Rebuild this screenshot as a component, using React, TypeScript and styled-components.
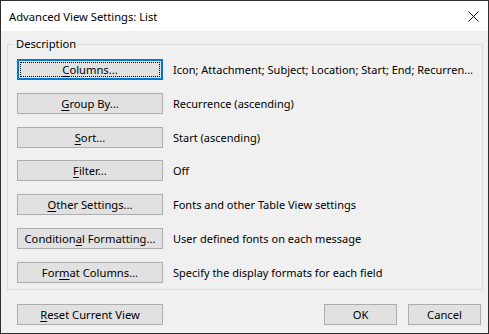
import React from "react";
import styled, { createGlobalStyle } from "styled-components";

const FS = "11px";

const Global = createGlobalStyle`
  html, body { margin: 0; padding: 0; background: #f0f0f0; }
  body { font-family: "Segoe UI", "Noto Sans", "Open Sans", sans-serif; font-size: ${FS}; color: #000; }
`;

const Window = styled.div`
  box-sizing: border-box;
  width: 489px;
  height: 334px;
  border: 1px solid #2f2f2f;
  background: #f0f0f0;
  display: flex;
  flex-direction: column;
`;

const TitleBar = styled.div`
  height: 30px;
  background: #fff;
  display: flex;
  align-items: center;
  justify-content: space-between;
  padding: 0 9px 0 8px;
  flex-shrink: 0;
`;

const Title = styled.span`
  font-size: 11.2px;
  color: #000;
`;

const Body = styled.div`
  flex: 1;
  display: flex;
  flex-direction: column;
  padding: 5px 7px 0 6px;
`;

const Group = styled.fieldset`
  margin: 0;
  border: 1px solid #dcdcdc;
  padding: 7px 9px 6px 9px;
  display: flex;
  flex-direction: column;
  gap: 12.8px;
`;

const Legend = styled.legend`
  padding: 0 2px;
  margin-left: -3px;
  font-size: 11.2px;
  line-height: 16px;
`;

const Row = styled.div`
  display: flex;
  align-items: center;
  gap: 10px;
`;

const Button = styled.button<{ $focused?: boolean; $w?: number }>`
  box-sizing: border-box;
  width: ${(p) => p.$w ?? 146}px;
  height: 21px;
  margin: 0;
  padding: 0;
  font-family: inherit;
  font-size: 11.2px;
  color: #000;
  background: #e1e1e1;
  border: ${(p) => (p.$focused ? "2px solid #0078d7" : "1px solid #adadad")};
  display: flex;
  align-items: center;
  justify-content: center;
  position: relative;
  flex-shrink: 0;
`;

const FocusRect = styled.span`
  position: absolute;
  inset: 1px;
  border: 1px dotted #000;
  pointer-events: none;
`;

const U = styled.span`
  text-decoration: underline;
  text-underline-offset: 2px;
`;

const Desc = styled.span`
  font-size: ${FS};
  white-space: nowrap;
`;

const Footer = styled.div`
  display: flex;
  align-items: center;
  justify-content: space-between;
  padding: 14px 0 0 10px;
`;

const Right = styled.div`
  display: flex;
  gap: 11px;
`;

const rows: { pre: string; key: string; post: string; desc: string; focused?: boolean }[] = [
  { pre: "", key: "C", post: "olumns...", desc: "Icon; Attachment; Subject; Location; Start; End; Recurren...", focused: true },
  { pre: "", key: "G", post: "roup By...", desc: "Recurrence (ascending)" },
  { pre: "", key: "S", post: "ort...", desc: "Start (ascending)" },
  { pre: "", key: "F", post: "ilter...", desc: "Off" },
  { pre: "", key: "O", post: "ther Settings...", desc: "Fonts and other Table View settings" },
  { pre: "Condition", key: "a", post: "l Formatting...", desc: "User defined fonts on each message" },
  { pre: "For", key: "m", post: "at Columns...", desc: "Specify the display formats for each field" },
];

export default function App() {
  return (
    <>
      <Global />
      <Window>
        <TitleBar>
          <Title>Advanced View Settings: List</Title>
          <svg width="11" height="11" viewBox="0 0 11 11">
            <path d="M0.5 0.5 L10.5 10.5 M10.5 0.5 L0.5 10.5" stroke="#000" strokeWidth="1" fill="none" />
          </svg>
        </TitleBar>
        <Body>
          <Group>
            <Legend>Description</Legend>
            {rows.map((r, i) => (
              <Row key={i}>
                <Button $focused={r.focused}>
                  {r.focused && <FocusRect />}
                  <span>
                    {r.pre}
                    <U>{r.key}</U>
                    {r.post}
                  </span>
                </Button>
                <Desc>{r.desc}</Desc>
              </Row>
            ))}
          </Group>
          <Footer>
            <Button>
              <span>
                <U>R</U>eset Current View
              </span>
            </Button>
            <Right>
              <Button $w={73}>OK</Button>
              <Button $w={73}>Cancel</Button>
            </Right>
          </Footer>
        </Body>
      </Window>
    </>
  );
}
